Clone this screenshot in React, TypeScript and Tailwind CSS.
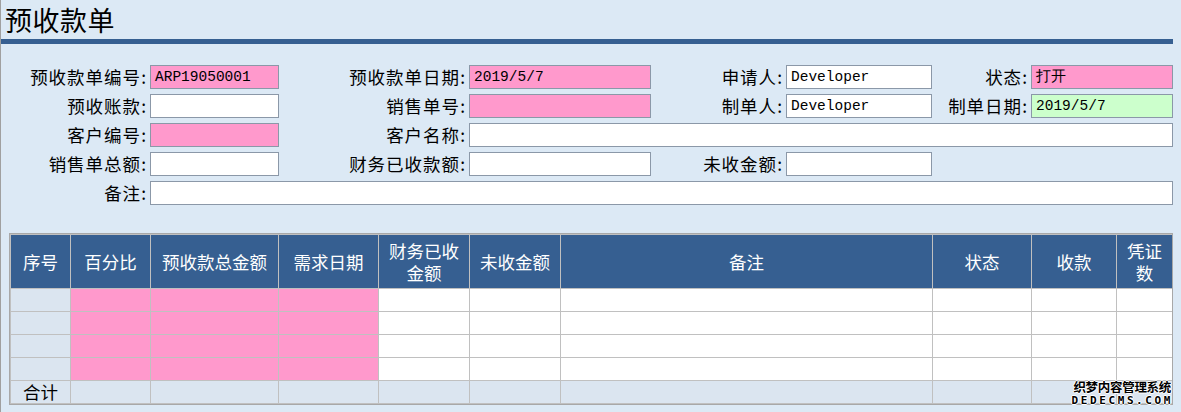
const pink = "bg-[#ff99cc]";

function Label({ text }: { text: string }) {
  return (
    <div className="flex items-center justify-end pr-[3px] text-[17.5px] leading-[24px] tracking-[1px] text-black whitespace-nowrap">
      {text}:
    </div>
  );
}

function Field({ value, color, span }: { value?: string; color?: string; span?: string }) {
  return (
    <div
      className={`h-[24px] border border-[#8b98a8] ${color ?? "bg-white"} ${span ?? ""} pl-[4px] font-['Liberation_Mono',monospace] text-[14.5px] leading-[23px] text-black whitespace-nowrap overflow-hidden`}
    >
      {value}
    </div>
  );
}

const headers = ["序号", "百分比", "预收款总金额", "需求日期", "财务已收金额", "未收金额", "备注", "状态", "收款", "凭证数"];

export default function App() {
  const rows = [0, 1, 2, 3];
  return (
    <div className="relative w-[1181px] h-[412px] overflow-hidden bg-[#dce9f5] border-l border-[#a0a0a0] font-['Noto_Sans_CJK_SC',sans-serif]">
      <div className="w-[1172px]">
        <div className="h-[39px] pl-[4px] pt-[3px] text-[27px] leading-[34px] tracking-[0.5px] text-black">预收款单</div>
        <div className="h-[5px] bg-[#365f91]" />

        <div className="mt-[21px] grid grid-cols-[149px_129px_190px_182px_135px_146px_99px_142px] gap-y-[5px]">
          <Label text="预收款单编号" />
          <Field value="ARP19050001" color={pink} />
          <Label text="预收款单日期" />
          <Field value="2019/5/7" color={pink} />
          <Label text="申请人" />
          <Field value="Developer" />
          <Label text="状态" />
          <Field value="打开" color={pink} />

          <Label text="预收账款" />
          <Field />
          <Label text="销售单号" />
          <Field color={pink} />
          <Label text="制单人" />
          <Field value="Developer" />
          <Label text="制单日期" />
          <Field value="2019/5/7" color="bg-[#ccffcc]" />

          <Label text="客户编号" />
          <Field color={pink} />
          <Label text="客户名称" />
          <Field span="col-span-5" />

          <Label text="销售单总额" />
          <Field />
          <Label text="财务已收款额" />
          <Field />
          <Label text="未收金额" />
          <Field />
          <div />
          <div />

          <Label text="备注" />
          <Field span="col-span-7" />
        </div>

        <div className="mt-[28px] ml-[8px] border border-[#a8a8a8]">
          <div className="grid grid-cols-[59px_79px_127px_99px_90px_90px_371px_98px_84px_55px] grid-rows-[53px_22px_22px_22px_22px_22px] gap-px p-px bg-[#c0c0c0]">
            {headers.map((h) => (
              <div key={h} className="flex items-center justify-center bg-[#365f91] px-[2px] text-center text-[17.5px] leading-[22px] text-white">
                {h}
              </div>
            ))}
            {rows.map((r) => (
              <>
                <div key={`a${r}`} className="bg-[#dbe5f0]" />
                <div key={`b${r}`} className={pink} />
                <div key={`c${r}`} className={pink} />
                <div key={`d${r}`} className={pink} />
                <div key={`e${r}`} className="bg-white" />
                <div key={`f${r}`} className="bg-white" />
                <div key={`g${r}`} className="bg-white" />
                <div key={`h${r}`} className="bg-white" />
                <div key={`i${r}`} className="bg-white" />
                <div key={`j${r}`} className="bg-white" />
              </>
            ))}
            <div className="flex items-center justify-center bg-[#dbe5f0] text-[17.5px] leading-[22px] text-black">合计</div>
            {[1, 2, 3, 4, 5, 6, 7, 8, 9].map((i) => (
              <div key={i} className="bg-[#dbe5f0]" />
            ))}
          </div>
        </div>
      </div>

      <div className="absolute right-[10px] bottom-[5px] flex flex-col items-end text-black font-bold [text-shadow:0_0_1px_#fff,1px_0_0_#fff,-1px_0_0_#fff,0_1px_0_#fff,0_-1px_0_#fff]">
        <div className="text-[12.5px] leading-[15px] tracking-[-0.3px]">织梦内容管理系统</div>
        <div className="font-['DejaVu_Sans_Mono',monospace] text-[11px] leading-[13px] tracking-[2.6px] -mr-[2px]">DEDECMS.COM</div>
      </div>
    </div>
  );
}
